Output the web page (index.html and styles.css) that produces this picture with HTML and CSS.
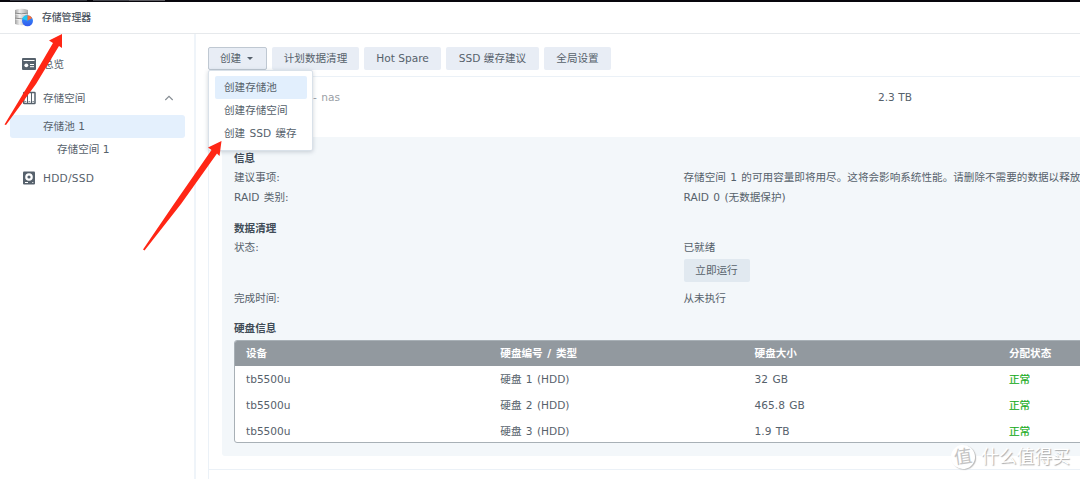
FILE: index.html
```html
<!DOCTYPE html>
<html lang="zh-CN">
<head>
<meta charset="utf-8">
<title>存储管理器</title>
<link rel="stylesheet" href="styles.css">
</head>
<body>
<div class="desktop-strip"><i class="strip-a"></i><i class="strip-b"></i><i class="strip-c"></i></div>
<div class="window">
  <header class="titlebar">
    <svg class="logo" width="20" height="20" viewBox="0 0 20 20">
      <defs><linearGradient id="metal"><stop offset="0" stop-color="#a2a2a2"/><stop offset=".35" stop-color="#eeeeee"/><stop offset="1" stop-color="#a9a9a9"/></linearGradient>
      <linearGradient id="blue" x2="0" y2="1"><stop offset="0" stop-color="#2f96fa"/><stop offset="1" stop-color="#3458ed"/></linearGradient></defs>
      <path d="M1 2Q7.500-.5 14 2V16Q7.500 18.500 1 16Z" fill="url(#metal)"/>
      <path d="M1 5.200Q7.500 6.500 14 5.200M1 10.200Q7.500 11.500 14 10.200" fill="none" stroke="#808080" stroke-width=".9"/>
      <path d="M1.500 6.200Q7.500 7.500 13.500 6.200M1.500 11.200Q7.500 12.500 13.500 11.200" fill="none" stroke="#fff" stroke-width=".6"/>
      <circle cx="13.500" cy="12.800" r="5.500" fill="url(#blue)"/>
      <path d="M13.500 12.800L8.300 11A5.500 5.500 0 0 1 13.500 7.300Z" fill="#21c8f3"/>
      <path d="M13.500 12.800V7.300A5.500 5.500 0 0 1 18.200 10Z" fill="#fb7137"/>
    </svg>
    <span class="app-name">存储管理器</span>
  </header>
  <div class="body">
    <nav class="sidebar">
      <div class="nav-item">
        <svg width="16" height="14" viewBox="0 0 16 14"><rect x="1" y="1" width="14" height="12" rx="1" fill="#56616c"/><path d="M2.500 3.500H13.500M9 7.500H13M9 9.700H13" stroke="#fff" stroke-width="1"/><circle cx="5.300" cy="8.300" r="1.900" fill="#fff"/></svg>
        <span>总览</span>
      </div>
      <div class="nav-item">
        <svg width="16" height="14" viewBox="0 0 16 14"><rect x="2.700" y="1.500" width="11.300" height="11" rx=".6" fill="#fff" stroke="#56616c" stroke-width="1.500"/><path d="M6.500 2V12M10.500 2V12" stroke="#56616c"/><path d="M3.600 10.500H5.300M7.500 10.500H9.200M11.400 10.500H13" stroke="#56616c" stroke-width=".7"/></svg>
        <span>存储空间</span>
        <svg class="chevron" width="10" height="6" viewBox="0 0 10 6"><path d="M1.300 5L5 1.300L8.700 5" fill="none" stroke="#858c93" stroke-width="1.100"/></svg>
      </div>
      <div class="nav-sub selected">存储池 1</div>
      <div class="nav-sub deeper">存储空间 1</div>
      <div class="nav-item last">
        <svg width="16" height="14" viewBox="0 0 16 14"><rect x="2" y=".5" width="12" height="13" rx="1" fill="#56616c"/><circle cx="8" cy="6" r="3.800" fill="#fff"/><circle cx="8" cy="6" r="1.600" fill="#56616c"/><path d="M4 11.500H7M11.300 11.500H12.300" stroke="#fff" stroke-width="1"/></svg>
        <span class="caps">HDD/SSD</span>
      </div>
    </nav>
    <main class="main">
      <div class="toolbar">
        <div class="menu-anchor">
          <button class="btn create">创建<i class="caret"></i></button>
          <div class="menu">
            <div class="menu-item active">创建存储池</div>
            <div class="menu-item">创建存储空间</div>
            <div class="menu-item">创建 SSD 缓存</div>
          </div>
        </div>
        <button class="btn plan">计划数据清理</button>
        <button class="btn spare">Hot Spare</button>
        <button class="btn cache">SSD 缓存建议</button>
        <button class="btn global">全局设置</button>
      </div>
      <section class="pool">
        <div class="pool-head"><span class="pool-name">- nas</span><span>2.3 TB</span></div>
        <div class="panel">
          <h2>信息</h2>
          <div class="row"><span>建议事项:</span><span>存储空间 1 的可用容量即将用尽。这将会影响系统性能。请删除不需要的数据以释放容</span></div>
          <div class="row"><span>RAID 类别:</span><span>RAID 0 (无数据保护)</span></div>
          <h2 class="spaced">数据清理</h2>
          <div class="row"><span>状态:</span><span>已就绪</span></div>
          <div class="row run"><span></span><button class="btn run-btn">立即运行</button></div>
          <div class="row"><span>完成时间:</span><span>从未执行</span></div>
          <h2 class="spaced disks-title">硬盘信息</h2>
          <div class="table">
            <div class="tr th"><span>设备</span><span>硬盘编号 / 类型</span><span>硬盘大小</span><span>分配状态</span></div>
            <div class="tr"><span>tb5500u</span><span>硬盘 1 (HDD)</span><span>32 GB</span><span class="ok">正常</span></div>
            <div class="tr"><span>tb5500u</span><span>硬盘 2 (HDD)</span><span>465.8 GB</span><span class="ok">正常</span></div>
            <div class="tr"><span>tb5500u</span><span>硬盘 3 (HDD)</span><span>1.9 TB</span><span class="ok">正常</span></div>
          </div>
        </div>
      </section>
      <section class="next-pool"></section>
    </main>
  </div>
</div>
<svg class="arrows" width="1080" height="479" viewBox="0 0 1080 479" fill="#ff2615">
  <path d="M62 34L49 40.500L53 43L29 84L4.500 124.500L6 125L36 84L59 46L62 48Z"/>
  <path d="M221.500 141L208 147.500L211.500 150L174 204L143 249.500L144.500 250.500L181 204L217 153.500L219.500 156Z"/>
</svg>
<div class="watermark"><span class="badge">值</span><span class="mark-text">什么值得买</span></div>
</body>
</html>
```
FILE: styles.css
```css
* { box-sizing: border-box; }
body {
  margin: 0;
  width: 1080px;
  height: 479px;
  overflow: hidden;
  position: relative;
  background: #fff;
  color: #56616b;
  font: 10.6px/20px "DejaVu Sans", "Noto Sans CJK SC", sans-serif;
}
button { font: inherit; color: inherit; border: 0; padding: 0; margin: 0; }
.desktop-strip { height: 2px; background: #08070d; display: flex; padding-left: 10px; }
.desktop-strip i { height: 1px; }
.strip-a { width: 77px; background: #34363f; }
.strip-b { width: 36px; margin-left: 6px; background: #42434a; }
.strip-c { width: 36px; background: #5d5c62; }
.window { height: 477px; display: flex; flex-direction: column; background: #fff; }
.titlebar {
  height: 32px;
  flex: none;
  border-bottom: 1px solid #e6e9ec;
  display: flex;
  align-items: center;
  padding-left: 14px;
}
.logo { margin-top: 1px; }
.app-name { margin-left: 8px; font-size: 9.8px; color: #3f4a55; -webkit-text-stroke: .15px; }
.body { flex: 1; min-height: 0; display: flex; }
.sidebar { width: 196px; flex: none; border-right: 2px solid #eff4f9; padding: 13px 9px 0 10px; }
.nav-item { height: 34px; display: flex; align-items: center; padding-left: 11px; }
.nav-item svg { flex: none; }
.nav-item span { margin-left: 6px; }
.caps { letter-spacing: .25px; }
.chevron { margin-left: auto; margin-right: 11px; }
.nav-sub { height: 23px; line-height: 23px; padding-left: 33px; border-radius: 3px; }
.selected { background: #e4f0fd; }
.deeper { padding-left: 47px; }
.last { height: 33px; }
.main { flex: 1; min-width: 0; padding: 13px 0 0 12px; display: flex; flex-direction: column; }
.toolbar { height: 29px; flex: none; display: flex; gap: 5px; }
.menu-anchor { position: relative; width: 59px; }
.btn { height: 23px; line-height: 23px; background: #e8edf5; border-radius: 2px; text-align: center; white-space: nowrap; }
.create { width: 59px; border: 1px solid #bfc8d2; line-height: 21px; padding-right: 2px; }
.caret { display: inline-block; margin: 0 0 2px 6px; border: 3px solid transparent; border-top-color: #56616c; border-bottom: 0; }
.plan { width: 87px; }
.spare { width: 77px; }
.cache { width: 93px; }
.global { width: 67px; }
.menu {
  position: absolute;
  z-index: 2;
  top: 23px;
  left: 0;
  width: 105px;
  height: 81px;
  padding: 5px 5px 5px 6px;
  background: #fff;
  border: 1px solid #d9e1e9;
  border-radius: 2px;
  box-shadow: 0 1px 4px rgba(60, 80, 100, .25);
}
.menu-item { height: 23px; line-height: 23px; padding-left: 9px; border-radius: 2px; white-space: nowrap; word-spacing: 1px; }
.active { background: #e2effd; }
.pool { height: 393px; flex: none; border: solid #ebf1f7; border-width: 1px 0 0 1px; padding-left: 13px; }
.pool-head { height: 60px; padding: 10px 0 0 91px; display: flex; }
.pool-name { width: 565px; color: #9aa0a6; word-spacing: 1px; }
.panel { height: 319px; background: #f3f7fa; border-radius: 3px 0 0 3px; padding: 11px 0 0 12px; overflow: hidden; word-spacing: 1px; }
h2 { margin: 0; height: 20px; font-size: inherit; line-height: 20px; font-weight: bold; color: #414c57; }
.row { display: flex; height: 19.5px; line-height: 19px; white-space: nowrap; }
.row > span:first-child { width: 449.500px; flex: none; }
.spaced { margin-top: 11px; }
.run { height: 31px; padding-top: 1px; }
.run-btn { width: 66px; background: #e1e9f0; line-height: 23px; }
.disks-title { height: 22px; margin-top: 9.5px; }
.table { width: 1040px; height: 103.500px; background: #fff; border: 1px solid #a8b0b6; border-bottom-width: 1.5px; border-radius: 3px; overflow: hidden; }
.tr { display: grid; grid-template-columns: 254.300px 254.300px 254.300px 1fr; height: 26px; line-height: 26px; padding-left: 11px; }
.th { height: 25px; line-height: 25px; background: #92999f; color: #fff; font-weight: bold; }
.ok { color: #1aac24; -webkit-text-stroke: .2px; }
.next-pool { flex: 1; border: solid #ebf1f7; border-width: 1px 0 0 1px; }
.arrows { position: absolute; z-index: 3; left: 0; top: 0; }
.watermark { position: absolute; z-index: 4; left: 951px; top: 445px; display: flex; align-items: center; color: #fff; text-shadow: 1px 1px 1px #aaa; }
.badge { width: 24px; height: 24px; line-height: 23px; text-align: center; border-radius: 50%; background: #fff; box-shadow: 1px 1px 1px #bbb; color: #c4c4c4; font-size: 18px; text-shadow: none; transform: rotate(-8deg); }
.mark-text { margin-left: 6px; font-size: 17.800px; line-height: 24px; }
```
